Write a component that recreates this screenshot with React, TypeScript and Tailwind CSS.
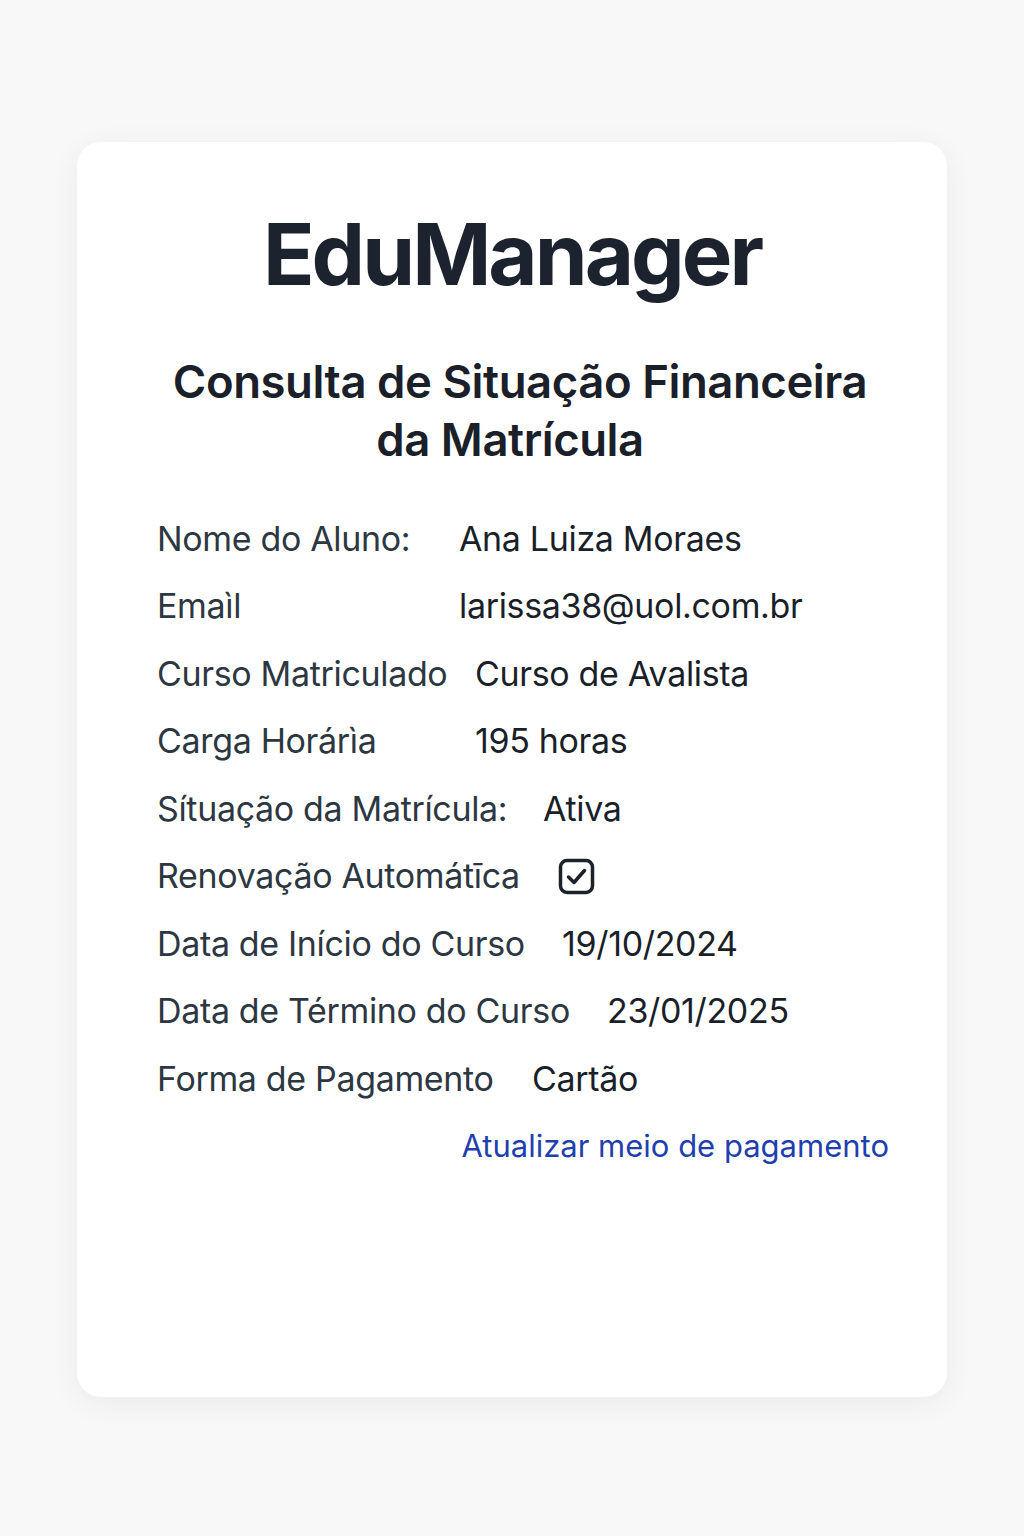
import React from "react";

type Row = {
  label: string;
  value?: string;
  labelWidth: string;
  check?: boolean;
};

const rows: Row[] = [
  { label: "Nome do Aluno:", value: "Ana Luiza Moraes", labelWidth: "w-[302px]" },
  { label: "Emaìl", value: "larissa38@uol.com.br", labelWidth: "w-[302px]" },
  { label: "Curso Matriculado", value: "Curso de Avalista", labelWidth: "w-[318px]" },
  { label: "Carga Horárìa", value: "195 horas", labelWidth: "w-[318px]" },
  { label: "Sítuação da Matrícula:", value: "Ativa", labelWidth: "w-[386px]" },
  { label: "Renovação Automátīca", check: true, labelWidth: "w-[401px]" },
  { label: "Data de Início do Curso", value: "19/10/2024", labelWidth: "w-[405px]" },
  { label: "Data de Término do Curso", value: "23/01/2025", labelWidth: "w-[450px]" },
  { label: "Forma de Pagamento", value: "Cartão", labelWidth: "w-[375px]" },
];

function CheckIcon() {
  return (
    <svg width="37" height="37" viewBox="0 0 37 37" fill="none">
      <rect x="2.5" y="2.5" width="32" height="32" rx="6.5" stroke="#1c222b" strokeWidth="3.5" />
      <path d="M10.5 19l5.5 5.5L26.5 12.5" stroke="#1c222b" strokeWidth="3.5" strokeLinecap="round" strokeLinejoin="round" />
    </svg>
  );
}

export default function App() {
  return (
    <div className="min-h-[1536px] bg-[#f8f8f8] pt-[142px] font-['Inter','Noto_Sans',sans-serif]">
      <div className="mx-auto w-[870px] h-[1255px] rounded-[24px] bg-white shadow-[0_6px_30px_rgba(0,0,0,0.06)] pt-[70px]">
        <h1 className="text-center text-[85px] leading-none font-bold tracking-[-0.035em] text-[#1c222e]">
          EduManager
        </h1>
        <h2 className="mt-[56px] text-center text-[45.5px] leading-[58px] font-semibold tracking-[-0.01em] text-[#1a1f29]">
          <span className="block pl-[16px]">Consulta de Situação Financeira</span>
          <span className="block pr-[4px]">da Matrícula</span>
        </h2>

        <div className="mt-[36px] pl-[80px] pr-[58px]">
          {rows.map((row) => (
            <div key={row.label} className="flex h-[67.5px] items-center text-[34px] leading-[40px] tracking-[-0.01em]">
              <span className={`${row.labelWidth} shrink-0 text-[#2c3742]`}>{row.label}</span>
              {row.check ? (
                <CheckIcon />
              ) : (
                <span className="text-[#1a1f2a]">{row.value}</span>
              )}
            </div>
          ))}
          <div className="flex h-[67.5px] items-center justify-end">
            <a href="#" className="text-[31px] leading-[40px] text-[#1f3fae]">
              Atualizar meio de pagamento
            </a>
          </div>
        </div>
      </div>
    </div>
  );
}
